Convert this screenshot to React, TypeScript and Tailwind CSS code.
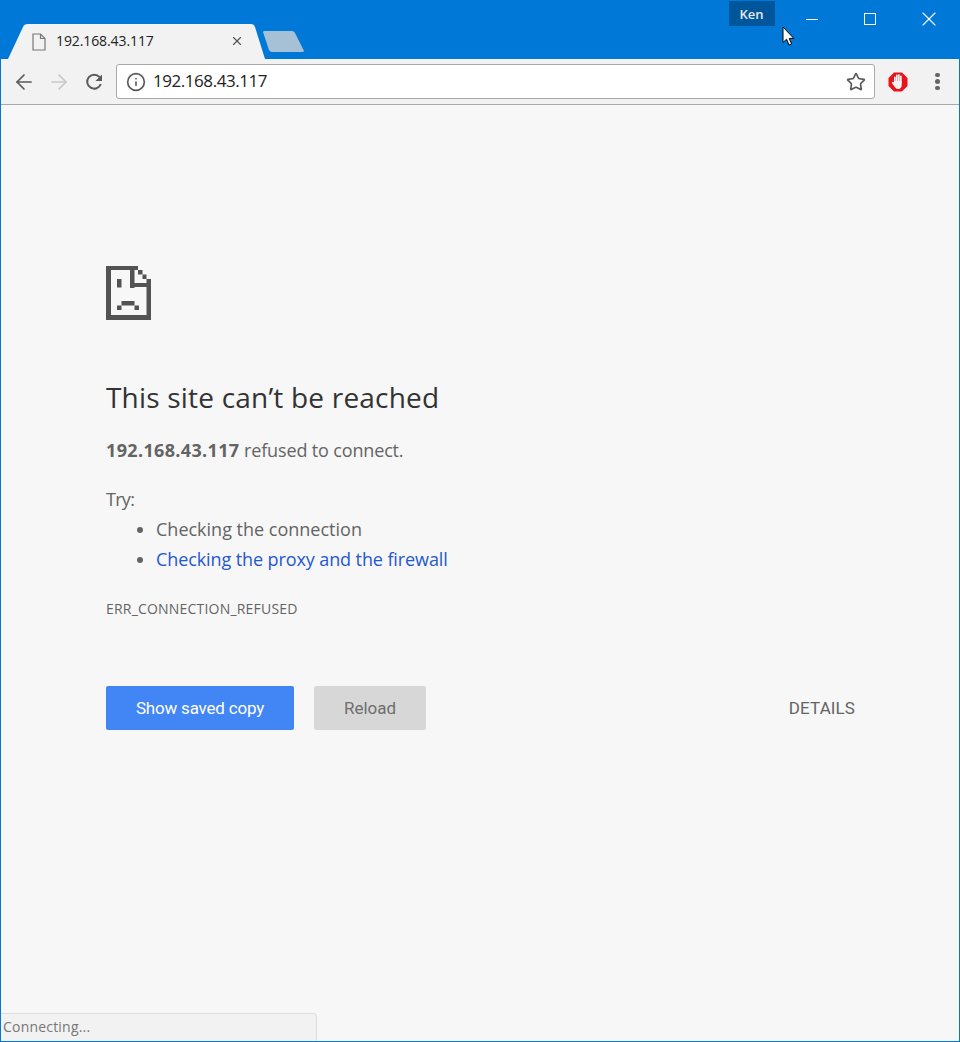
import { ArrowLeft, ArrowRight, Info, Star, X } from "lucide-react";

const uiFont = "font-['Open_Sans','Noto_Sans',sans-serif]";

function TabShape() {
  return (
    <svg className="absolute inset-0" width="258" height="35" viewBox="0 0 258 35" aria-hidden>
      <path d="M0 35 L15 3 Q16 0 20 0 L243 0 Q246 0 247 3 L257 35 Z" fill="#f2f2f2" />
    </svg>
  );
}

function PageIcon({ className }: { className?: string }) {
  return (
    <svg className={className} width="14" height="18" viewBox="0 0 14 18" fill="none" stroke="#777" strokeWidth="1.2" aria-hidden>
      <path d="M1 1 H8.5 L13 5.5 V17 H1 Z" />
      <path d="M8.5 1 V5.5 H13" />
    </svg>
  );
}

function ReloadIcon() {
  return (
    <svg width="20" height="20" viewBox="0 0 20 20" aria-hidden>
      <path d="M15.6 5.2 A7 7 0 1 0 16.8 12" fill="none" stroke="#5a5a5a" strokeWidth="2" />
      <path d="M18 2.4 V9 H11.4 Z" fill="#5a5a5a" />
    </svg>
  );
}

function StopHand() {
  return (
    <svg width="20" height="20" viewBox="0 0 20 20" aria-hidden>
      <path d="M6 0.5 H14 L19.5 6 V14 L14 19.5 H6 L0.5 14 V6 Z" fill="#e8141c" />
      <g fill="#f3f3f3">
        <rect x="6" y="4.5" width="1.7" height="7" rx="0.85" />
        <rect x="8" y="2.6" width="1.7" height="8" rx="0.85" />
        <rect x="10" y="2.2" width="1.7" height="8" rx="0.85" />
        <rect x="12" y="3.4" width="1.7" height="8" rx="0.85" />
        <path d="M6 9 H13.7 V13 Q13.6 17 10.2 17 Q8 17 6.8 15 L3.9 11 Q3.6 9.8 4.6 9.7 Q5.4 9.6 6 10.4 Z" />
      </g>
    </svg>
  );
}

function Cursor() {
  return (
    <svg className="absolute left-[781px] top-[26px]" width="13" height="21" viewBox="0 0 13 21" aria-hidden>
      <path d="M1 1 V16.5 L4.6 13.2 L7 19 L9.6 18 L7.2 12.4 H11.8 Z" fill="#fff" stroke="#000" strokeWidth="1" />
    </svg>
  );
}

function SadFile() {
  return (
    <svg width="45" height="55" viewBox="0 0 45 55" fill="#535353" aria-hidden>
      <rect x="0" y="1" width="5" height="54" />
      <rect x="0" y="1" width="32" height="4" />
      <rect x="24" y="1" width="4.5" height="22" />
      <rect x="24" y="18" width="21" height="4" />
      <rect x="40.5" y="14" width="4.5" height="41" />
      <rect x="0" y="50" width="45" height="5" />
      <rect x="32" y="5" width="4.5" height="4.5" />
      <rect x="36.5" y="9.5" width="4" height="4.5" />
      <rect x="11" y="14" width="4.5" height="8.5" />
      <rect x="15.5" y="36" width="13" height="4.5" />
      <rect x="11" y="40.5" width="4.5" height="4.5" />
      <rect x="28.5" y="40.5" width="4.5" height="4.5" />
    </svg>
  );
}

export default function App() {
  return (
    <div className={`relative flex h-[1042px] w-[960px] flex-col overflow-hidden border-x border-b border-[#0078d7] bg-[#f7f7f7] ${uiFont}`}>
      {/* Title bar */}
      <div className="relative flex h-[59px] shrink-0 items-end bg-[#0078d7] pl-[7px]">
        <div className="relative flex h-[35px] w-[258px] items-center pl-[24px]">
          <TabShape />
          <PageIcon className="relative" />
          <span className="relative mb-[2px] ml-[10px] text-[14px] tracking-[-0.1px] text-[#222]">192.168.43.117</span>
          <X className="absolute left-[222px] top-[10px] size-[14px] text-[#555]" strokeWidth={2} />
        </div>
        <svg className="relative mb-[7px] ml-[-3px]" width="42" height="21" viewBox="0 0 42 21" aria-hidden>
          <path d="M0 1 Q0 0 2 0 L29 0 Q31 0 32 2 L41 20 Q41 21 39 21 L9 21 Q7 21 6 19 Z" fill="#a6c0d6" />
        </svg>
        <div className="absolute left-[728px] top-px flex h-[25px] w-[46px] items-center justify-center bg-[#00569b] pt-[2px] pr-px text-[13px] font-semibold text-[#e8e8e8]">
          Ken
        </div>
        {/* Window controls */}
        <div className="absolute right-0 top-0 flex h-[38px] items-center">
          <div className="flex w-[58px] justify-center"><div className="h-px w-[12px] bg-white" /></div>
          <div className="flex w-[58px] justify-center"><div className="size-[12px] border border-white" /></div>
          <div className="flex w-[60px] justify-center"><X className="size-[24px] text-white" strokeWidth={1.1} /></div>
        </div>
      </div>

      {/* Toolbar */}
      <div className="flex h-[46px] shrink-0 items-center border-b border-[#a9a9a9] bg-[#f2f2f2] pl-[11px]">
        <ArrowLeft className="size-[24px] text-[#5a5a5a]" strokeWidth={1.7} />
        <ArrowRight className="ml-[11px] size-[24px] text-[#c8c8c8]" strokeWidth={1.7} />
        <div className="ml-[13px] flex size-[20px] items-center justify-center"><ReloadIcon /></div>
        <div className="ml-[12px] flex h-[35px] w-[759px] items-center rounded-[3px] border border-[#a9a9a9] bg-white pl-[9px] pr-[8px]">
          <Info className="size-[20px] text-[#5a5a5a]" strokeWidth={2} />
          <span className="mb-[2px] ml-[7px] flex-1 text-[17px] tracking-[-0.45px] text-[#222]">192.168.43.117</span>
          <Star className="size-[20px] text-[#5a5a5a]" strokeWidth={2} />
        </div>
        <div className="ml-[13px]"><StopHand /></div>
        <div className="ml-[27px] flex flex-col gap-[2px]">
          <span className="size-[4.5px] rounded-full bg-[#646464]" />
          <span className="size-[4.5px] rounded-full bg-[#646464]" />
          <span className="size-[4.5px] rounded-full bg-[#646464]" />
        </div>
      </div>

      {/* Error page */}
      <main className="flex flex-col pl-[105px] pr-[104px] pt-[160px]">
        <SadFile />
        <h1 className="mt-[59px] h-[36px] text-[28px] leading-[36px] tracking-[0.2px] text-[#333]">This site can’t be reached</h1>
        <p className="mt-[23px] h-[24px] text-[18px] leading-[24px] tracking-[-0.15px] text-[#646464]">
          <strong className="font-bold tracking-[0.35px]">192.168.43.117</strong> refused to connect.
        </p>
        <p className="mt-[25px] h-[24px] text-[18px] leading-[24px] tracking-[-0.7px] text-[#646464]">Try:</p>
        <ul className="mt-[3px] list-disc pl-[50px] text-[18px] leading-[30px] text-[#646464]">
          <li>Checking the connection</li>
          <li>
            <a className="tracking-[-0.1px] text-[#2457d0]">Checking the proxy and the firewall</a>
          </li>
        </ul>
        <div className="mt-[25px] h-[20px] text-[14px] leading-[20px] tracking-[0.2px] text-[#646464]">ERR_CONNECTION_REFUSED</div>
        <div className="mt-[67px] flex items-center font-['Roboto',sans-serif] text-[17px]">
          <button className="h-[44px] w-[188px] rounded-[2px] bg-[#4285f4] pt-px tracking-[-0.2px] text-white">Show saved copy</button>
          <button className="ml-[20px] h-[44px] w-[112px] rounded-[2px] bg-[#d7d7d7] pt-px text-[#6e6e6e]">Reload</button>
          <span className="ml-auto pt-px tracking-[0.1px] text-[#646464]">DETAILS</span>
        </div>
      </main>

      {/* Status bubble */}
      <div className="absolute bottom-0 left-0 h-[28px] w-[316px] rounded-tr-[4px] border-r border-t border-[#dcdcdc] bg-[#f2f2f2] pl-[2px] text-[14px] leading-[26px] tracking-[0.2px] text-[#777]">
        Connecting...
      </div>

      <Cursor />
    </div>
  );
}
